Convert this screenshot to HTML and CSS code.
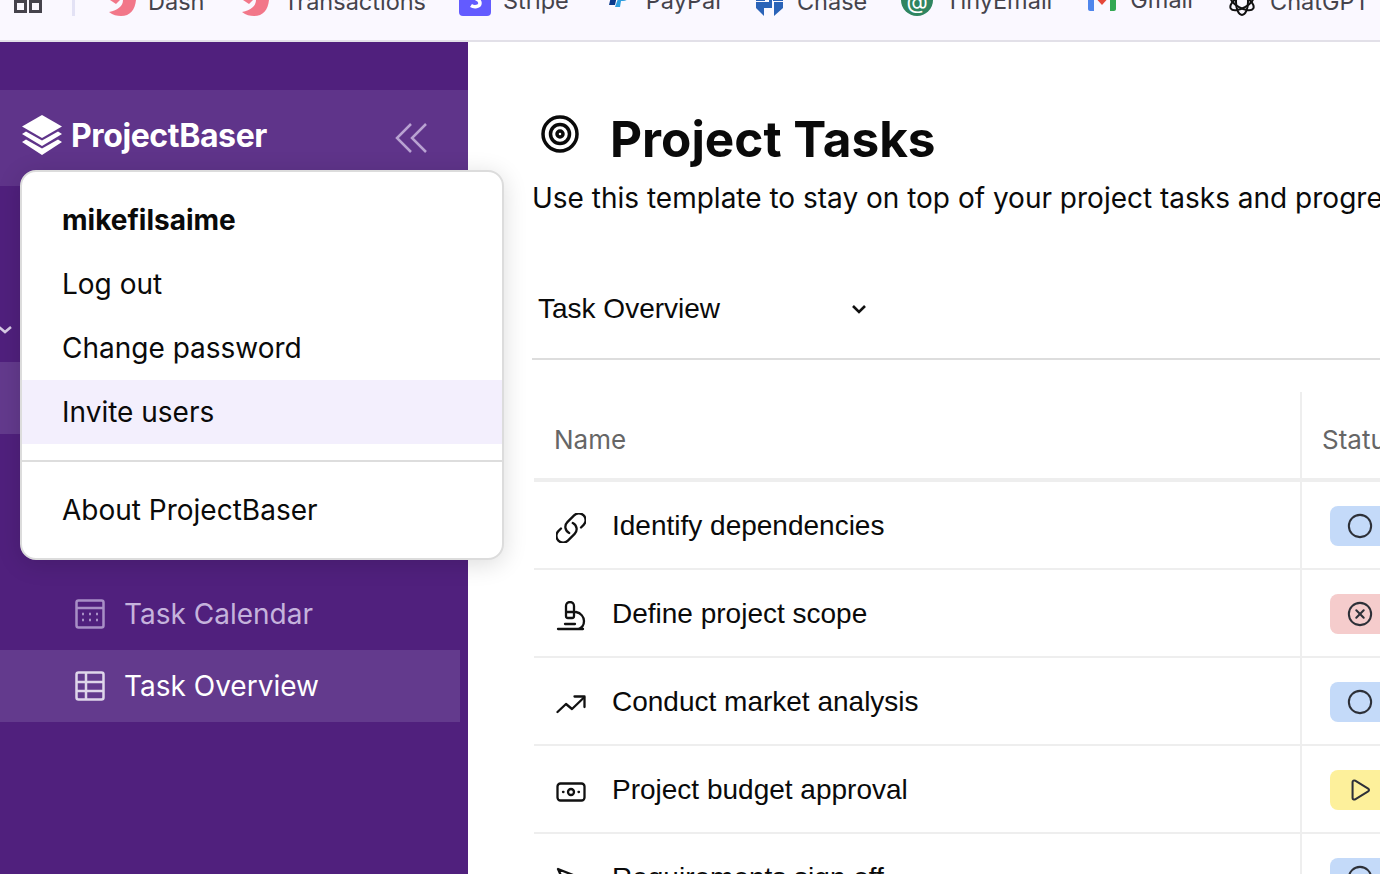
FILE: index.html
```html
<!DOCTYPE html>
<html lang="en">
<head>
    <meta charset="UTF-8">
    <title>Project Tasks</title>
    <link rel="stylesheet" href="styles.css">
</head>
<body>
<div class="bookmarks">
    <svg class="apps" width="28" height="14" viewBox="0 0 28 14"><rect x="1.5" y="1.5" width="10" height="10" fill="none" stroke="#45434c" stroke-width="3"/><rect x="16.5" y="1.5" width="10" height="10" fill="none" stroke="#45434c" stroke-width="3"/></svg>
    <span class="bar-divider"></span>
    <div class="mark mark-dash">
        <svg width="28" height="28" viewBox="0 0 28 28" fill="#f27789"><path d="M15 12C15 18 10 22 1 24 5 27 9 28 13 28 22 28 27 22 28 12zM2 12H12L8 16z"/></svg>
        <span>Dash</span>
    </div>
    <div class="mark mark-trans">
        <svg width="28" height="28" viewBox="0 0 28 28" fill="#f27789"><path d="M15 12C15 18 10 22 1 24 5 27 9 28 13 28 22 28 27 22 28 12zM2 12H12L8 16z"/></svg>
        <span>Transactions</span>
    </div>
    <div class="mark mark-stripe">
        <svg width="32" height="32" viewBox="0 0 32 32"><rect width="32" height="32" rx="4" fill="#635bff"/><path d="M21 10c-2-1.500-8-2-8 1.500 0 3.500 8 2.500 8 7.500 0 4-6 4.500-9 2.500" fill="none" stroke="#fff" stroke-width="3.500"/></svg>
        <span>Stripe</span>
    </div>
    <div class="mark mark-paypal">
        <svg width="28" height="28" viewBox="0 0 28 28"><path d="M8 0h12c4 2 2 12-6 12h-3l-2 9H3z" fill="#0a3a8c"/><path d="M13 12h4c4 0 7-3 8-8 1 6-2 13-8 13h-2l-1 6H9z" fill="#2e9fdf"/></svg>
        <span>PayPal</span>
    </div>
    <div class="mark mark-chase">
        <svg width="28" height="28" viewBox="0 0 28 28"><path d="M1 6h9v7H1zM18 6h10v7H18z" fill="#2a63b8"/><path d="M1 14h13v-8h3v14H9v8l-8-8zM19 14h9v6l-9 8z" fill="#2a63b8"/></svg>
        <span>Chase</span>
    </div>
    <div class="mark mark-tiny">
        <svg width="32" height="32" viewBox="0 0 32 32"><circle cx="16" cy="16" r="16" fill="#2f8560"/><text x="16" y="25" text-anchor="middle" class="tiny-at">@</text></svg>
        <span>TinyEmail</span>
    </div>
    <div class="mark mark-gmail">
        <svg width="28" height="28" viewBox="0 0 28 28"><path d="M0 0h6v28H2c-1 0-2-1-2-2z" fill="#4f86ec"/><path d="M22 0h6v26c0 1-1 2-2 2h-4z" fill="#33a853"/><path d="M5 12H23L14 22z" fill="#e5483a"/></svg>
        <span>Gmail</span>
    </div>
    <div class="mark mark-gpt">
        <svg width="28" height="28" viewBox="0 0 28 28" fill="none" stroke="#111" stroke-width="2"><ellipse cx="14" cy="14" rx="6" ry="13"/><ellipse cx="14" cy="14" rx="6" ry="13" transform="rotate(60 14 14)"/><ellipse cx="14" cy="14" rx="6" ry="13" transform="rotate(120 14 14)"/></svg>
        <span>ChatGPT</span>
    </div>
</div>

<div class="app">
    <aside class="sidebar">
        <div class="brand">
            <svg width="42" height="42" viewBox="0 0 42 42"><path d="M21 1 41 12.500 21 24 1 12.500z" fill="#fff"/><path d="M5 17.500 21 26.500 37 17.500 41 20 21 32 1 20z" fill="#fff"/><path d="M5 25.500 21 34.500 37 25.500 41 28 21 41 1 28z" fill="#fff"/></svg>
            <span class="brand-name">ProjectBaser</span>
            <svg class="collapse" width="34" height="32" viewBox="0 0 34 32" fill="none" stroke="#b9a3d2" stroke-width="2.500"><path d="M17 2 3 16 17 30"/><path d="M32 2 18 16 32 30"/></svg>
        </div>
        <nav class="nav">
            <div class="nav-group">
                <svg width="12" height="8" viewBox="0 0 12 8" fill="none" stroke="#d8cbe6" stroke-width="2.500"><path d="M-1 1 5 6 11 1"/></svg>
            </div>
            <div class="nav-item is-open"></div>
            <div class="nav-spacer"></div>
            <div class="nav-item">
                <svg width="30" height="30" viewBox="0 0 30 30" fill="none" stroke="#a88fc6" stroke-width="2.500"><rect x="1.500" y="1.500" width="27" height="27" rx="2"/><path d="M1.500 9h27"/><path d="M7 15h2M14 15h2M21 15h2M7 21h2M14 21h2M21 21h2" stroke-width="2.500"/></svg>
                <span>Task Calendar</span>
            </div>
            <div class="nav-item is-active">
                <svg width="30" height="30" viewBox="0 0 30 30" fill="none" stroke="#dfd6ea" stroke-width="2.500"><rect x="1.500" y="1.500" width="27" height="27" rx="2"/><path d="M1.500 11h27M1.500 20h27M11 1.500v27"/></svg>
                <span>Task Overview</span>
            </div>
        </nav>
    </aside>

    <main class="main">
        <div class="title-row">
            <svg class="target" width="40" height="40" viewBox="0 0 40 40" fill="none" stroke="#0a0a0a" stroke-width="3.500"><circle cx="20" cy="20" r="17"/><circle cx="20" cy="20" r="9.500"/><circle cx="20" cy="20" r="3"/></svg>
            <h1>Project Tasks</h1>
        </div>
        <p class="intro">Use this template to stay on top of your project tasks and progress</p>
        <div class="view-bar">
            <div class="view-select">
                <span>Task Overview</span>
                <svg width="16" height="10" viewBox="0 0 16 10" fill="none" stroke="#111" stroke-width="2.600"><path d="M2 2 8 8 14 2"/></svg>
            </div>
        </div>
        <div class="table">
            <div class="row head">
                <div class="cell name">Name</div>
                <div class="cell status">Status</div>
            </div>
            <div class="row">
                <div class="cell name">
                    <svg viewBox="2 2 20 20"><path d="M13.190 8.688a4.500 4.500 0 0 1 1.242 7.244l-4.500 4.500a4.500 4.500 0 0 1-6.364-6.364l1.757-1.757m13.350-.622 1.757-1.757a4.500 4.500 0 0 0-6.364-6.364l-4.500 4.500a4.500 4.500 0 0 0 1.242 7.244"/></svg>
                    <span>Identify dependencies</span>
                </div>
                <div class="cell status"><span class="chip chip-blue"><svg viewBox="0 0 28 28"><circle cx="14" cy="14" r="12"/></svg></span></div>
            </div>
            <div class="row">
                <div class="cell name">
                    <svg viewBox="0 0 30 30"><path d="M2 28h25M9 23h10M10 11h8M10 5a4 4 0 0 1 8 0v10a2 2 0 0 1-2 2h-4a2 2 0 0 1-2-2zM20 11c5 1 8 5 8 9 0 4-2 7-6 8"/></svg>
                    <span>Define project scope</span>
                </div>
                <div class="cell status"><span class="chip chip-red"><svg viewBox="0 0 28 28"><circle cx="14" cy="14" r="12"/><path d="M10 10l8 8M18 10l-8 8"/></svg></span></div>
            </div>
            <div class="row">
                <div class="cell name">
                    <svg viewBox="0 0 30 30"><path d="M1.500 23 10 15l6 5L28 8.500"/><path d="M18.500 7.500h10V18"/></svg>
                    <span>Conduct market analysis</span>
                </div>
                <div class="cell status"><span class="chip chip-blue"><svg viewBox="0 0 28 28"><circle cx="14" cy="14" r="12"/></svg></span></div>
            </div>
            <div class="row">
                <div class="cell name">
                    <svg viewBox="0 0 30 30"><rect x="1.500" y="6.500" width="27" height="17" rx="3"/><circle cx="15" cy="15" r="3"/><path d="M7 15h.5M22.500 15h.5"/></svg>
                    <span>Project budget approval</span>
                </div>
                <div class="cell status"><span class="chip chip-yellow"><svg viewBox="0 0 28 28"><path d="M6 5.500c0-1.500 1.500-2.300 2.800-1.500l14 8.500c1.200.8 1.200 2.400 0 3.100l-14 8.400c-1.300.8-2.800-.1-2.800-1.500z"/></svg></span></div>
            </div>
            <div class="row">
                <div class="cell name">
                    <svg viewBox="0 0 30 30"><path d="M2 4 27 14 3 25 7 15zM7 15h20"/></svg>
                    <span>Requirements sign off</span>
                </div>
                <div class="cell status"><span class="chip chip-blue"><svg viewBox="0 0 28 28"><circle cx="14" cy="14" r="12"/></svg></span></div>
            </div>
        </div>
    </main>
</div>

<div class="user-menu">
    <div class="menu-item menu-user">mikefilsaime</div>
    <div class="menu-item">Log out</div>
    <div class="menu-item">Change password</div>
    <div class="menu-item is-hover">Invite users</div>
    <div class="menu-sep"></div>
    <div class="menu-item">About ProjectBaser</div>
</div>
</body>
</html>
```

FILE: styles.css
```css
*{
    margin:0;padding:0;
    box-sizing:border-box;
}
html,body{
    width:1380px;
    height:874px;
    overflow:hidden;
}
body{
    font-family:Inter,"Liberation Sans",sans-serif;
    color:#0a0a0a;
    background:#fff;
    display:flex;
    flex-direction:column;
}

/* browser bookmarks bar, cut off at the top */
.bookmarks{
    height:42px;
    flex:none;
    background:#faf8ff;
    border-bottom:2px solid #e2e0e8;
    overflow:hidden;
    display:flex;
    align-items:flex-end;
    padding:0 0 24px 14px;
    white-space:nowrap;
}
.apps{
    flex:none;
    margin-bottom:2px;
}
.bar-divider{
    flex:none;
    width:3px;
    height:30px;
    background:#e3e2f5;
    margin:0 33px 0 30px;
}
.mark{
    flex:none;
    display:flex;
    align-items:center;
    gap:12px;
    font-size:23.5px;
    color:#45434c;
}
.mark svg{
    flex:none;
    align-self:flex-end;
}
.mark-dash{margin-right:37px;}
.mark-trans{margin-right:33px;gap:14px;}
.mark-stripe{margin-right:37px;}
.mark-paypal{margin-right:34px;}
.mark-paypal svg{margin-bottom:4px;}
.mark-chase{margin-right:34px;gap:14px;}
.mark-tiny{margin-right:36px;}
.mark-gmail{margin-right:35px;gap:14px;}
.mark-gmail svg{margin-bottom:5px;}
.mark-gpt{gap:14px;}
.tiny-at{
    font-size:22px;
    fill:#fff;
}

.app{
    flex:1;
    display:flex;
    min-height:0;
}

/* sidebar */
.sidebar{
    width:468px;
    flex:none;
    background:#50207d;
    padding-top:48px;
}
.brand{
    height:96px;
    background:#5f348a;
    display:flex;
    align-items:center;
    padding:0 40px 6px 21px;
}
.brand-name{
    font-size:32px;
    font-weight:700;
    letter-spacing:-0.4px;
    color:#fff;
    margin-left:8px;
    flex:1;
}
.collapse{
    margin-top:6px;
}
.nav{
    padding-top:108px;
}
.nav-group{
    height:68px;
    padding-top:4px;
    display:flex;
    align-items:center;
}
.nav-spacer{
    height:144px;
}
.nav-item{
    height:72px;
    width:460px;
    display:flex;
    align-items:center;
    gap:19px;
    padding-left:75px;
    font-size:28px;
    color:#c5b3dc;
}
.nav-item.is-open{
    background:#633a8d;
}
.nav-item.is-active{
    background:#633a8d;
    color:#fff;
}

/* main column */
.main{
    flex:1;
    min-width:0;
    padding:64px 0 0 64px;
    overflow:hidden;
}
.title-row{
    display:flex;
    align-items:flex-start;
    height:62px;
}
.target{
    flex:none;
    margin:8px 30px 0 8px;
}
h1{
    font-size:49.5px;
    font-weight:700;
    line-height:66px;
    white-space:nowrap;
}
.intro{
    font-size:28px;
    line-height:40px;
    margin-top:10px;
    white-space:nowrap;
}
.view-bar{
    margin-top:70px;
    height:72px;
    border-bottom:2px solid #dddddd;
}
.view-select{
    width:335px;
    padding-left:6px;
    font-family:"Liberation Sans",sans-serif;
    font-size:28px;
    line-height:42px;
    display:flex;
    align-items:center;
    justify-content:space-between;
}

.table{
    margin:32px 0 0 2px;
    width:1000px;
}
.row{
    display:flex;
    height:88px;
    border-bottom:2px solid #eeeeee;
}
.row.head{
    height:90px;
    border-bottom-width:4px;
    color:#666;
}
.cell{
    display:flex;
    align-items:center;
    font-family:"Liberation Sans",sans-serif;
    font-size:28px;
}
.cell.name{
    width:768px;
    flex:none;
    padding-left:22px;
    border-right:2px solid #eeeeee;
    gap:26px;
}
.cell.name span{
    margin-top:2px;
}
.cell.status{
    padding:2px 0 0 28px;
    flex:1;
}
.head .cell,
.head .cell.name,
.head .cell.status{
    padding:8px 0 0 20px;
    font-family:Inter,"Liberation Sans",sans-serif;
    font-size:26px;
}
.cell.name svg{
    width:30px;
    height:30px;
    flex:none;
    margin-top:6px;
    fill:none;
    stroke:#111;
    stroke-linecap:round;
    stroke-linejoin:round;
}
.cell.name svg *{
    stroke-width:2.3px;
    vector-effect:non-scaling-stroke;
}
.chip{
    display:flex;
    align-items:center;
    width:120px;
    height:40px;
    border-radius:8px;
    padding-left:17px;
}
.chip svg{
    width:26px;
    height:26px;
    fill:none;
    stroke:#2d3038;
    stroke-width:2.200;
    stroke-linejoin:round;
    stroke-linecap:round;
}
.chip-blue{background:#c4daf9;}
.chip-red{background:#f5cccc;}
.chip-yellow{background:#fdf09b;}

/* account dropdown floats over the sidebar and the page */
.user-menu{
    position:absolute;
    left:20px;
    top:170px;
    width:484px;
    height:390px;
    background:#fff;
    border:2px solid #dcdcdc;
    border-radius:16px;
    box-shadow:0 4px 24px rgba(0,0,0,.14);
    padding-top:16px;
    font-size:28px;
}
.menu-item{
    height:64px;
    display:flex;
    align-items:center;
    padding-left:40px;
}
.menu-user{
    font-weight:700;
}
.menu-item.is-hover{
    background:#f3effd;
}
.menu-sep{
    height:2px;
    background:#dddddd;
    margin:16px 0;
}
```
